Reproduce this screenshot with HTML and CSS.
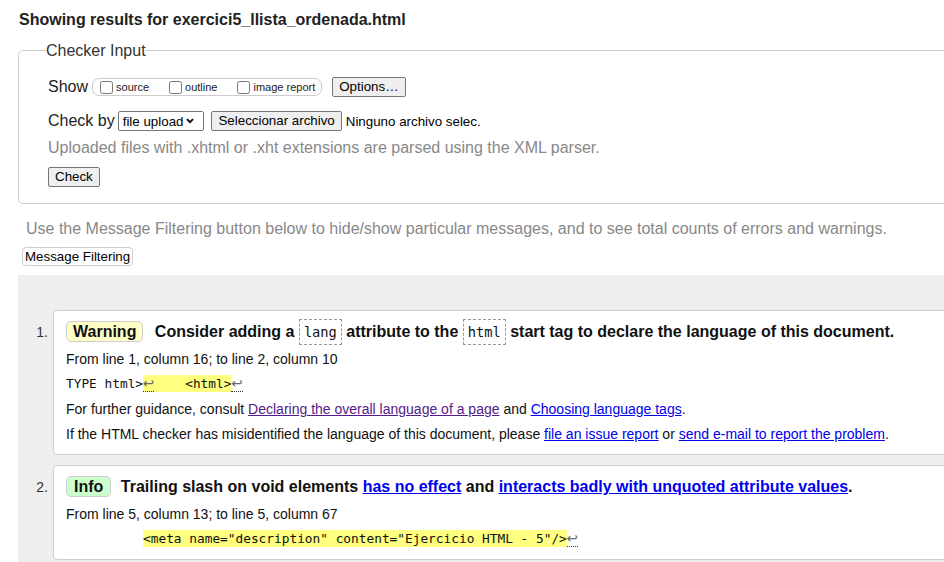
FILE: index.html
```html
<!DOCTYPE html>
<html lang="en">
<head>
<meta charset="utf-8">
<title>Showing results for exercici5_llista_ordenada.html</title>
<link rel="stylesheet" href="styles.css">
</head>
<body>
<div class="page">
  <h2 class="results-heading">Showing results for exercici5_llista_ordenada.html</h2>

  <fieldset class="checker">
    <legend>Checker Input</legend>
    <div class="row show-row">
      <span class="row-label">Show</span>
      <span class="opts">
        <label class="opt"><input type="checkbox">source</label>
        <label class="opt"><input type="checkbox">outline</label>
        <label class="opt"><input type="checkbox">image report</label>
      </span>
      <button class="btn options-btn" type="button">Options…</button>
    </div>
    <div class="row checkby-row">
      <span class="row-label">Check by</span>
      <span class="select">file upload
        <svg class="chev" width="8" height="6" viewBox="0 0 8 6" aria-hidden="true"><path d="M1 1.2 L4 4.2 L7 1.2" fill="none" stroke="#000" stroke-width="1.8"/></svg>
      </span>
      <button class="btn file-btn" type="button">Seleccionar archivo</button>
      <span class="nofile">Ninguno archivo selec.</span>
    </div>
    <p class="hint">Uploaded files with .xhtml or .xht extensions are parsed using the XML parser.</p>
    <div class="check-row"><button class="btn" type="button">Check</button></div>
  </fieldset>

  <p class="filter-note">Use the Message Filtering button below to hide/show particular messages, and to see total counts of errors and warnings.</p>
  <div class="filter-row"><button class="filter-btn" type="button">Message Filtering</button></div>

  <div class="results-area">
    <ol class="messages">
      <li class="item">
        <span class="num">1.</span>
        <div class="msg warning">
          <p class="title"><span class="badge">Warning</span> <span>Consider adding a <code class="tag">lang</code> attribute to the <code class="tag">html</code> start tag to declare the language of this document.</span></p>
          <p class="line">From line 1, column 16; to line 2, column 10</p>
          <p class="extract">TYPE html&gt;<mark class="hl"><b class="lf">↩</b>    &lt;html&gt;</mark><b class="lf">↩</b></p>
          <p class="line">For further guidance, consult <a class="visited" href="#">Declaring the overall language of a page</a> and <a href="#">Choosing language tags</a>.</p>
          <p class="line">If the HTML checker has misidentified the language of this document, please <a href="#">file an issue report</a> or <a href="#">send e-mail to report the problem</a>.</p>
        </div>
      </li>
      <li class="item">
        <span class="num">2.</span>
        <div class="msg info">
          <p class="title"><span class="badge">Info</span> <span>Trailing slash on void elements <a href="#">has no effect</a> and <a href="#">interacts badly with unquoted attribute values</a>.</span></p>
          <p class="line">From line 5, column 13; to line 5, column 67</p>
          <p class="extract">          <mark class="hl">&lt;meta name="description" content="Ejercicio HTML - 5"/&gt;</mark><b class="lf">↩</b></p>
        </div>
      </li>
    </ol>
  </div>
</div>
</body>
</html>
```

FILE: styles.css
```css
html, body {
  margin: 0;
  padding: 0;
  overflow: hidden;
  background: #fff;
}

body {
  font-family: "Liberation Sans", Arial, sans-serif;
  font-size: 16px;
  color: #222;
}

.page {
  width: 1040px;
  padding-top: 10px;
}

.results-heading {
  margin: 0 0 0 19px;
  font-size: 16px;
  line-height: 19px;
  font-weight: bold;
  color: #222;
}

/* ---------- Checker input ---------- */
.checker {
  margin: 12px 0 0 18px;
  padding: 16px 0 16px 29px;
  border: 1px solid #ccc;
  border-radius: 5px;
  min-width: 0;
}

.checker legend {
  padding: 0;
  margin-left: -2px;
  font-size: 16px;
  line-height: 19px;
  color: #333;
}

.row {
  display: flex;
  align-items: center;
  height: 22px;
}

.checkby-row {
  margin-top: 12px;
}

.row-label {
  font-size: 16px;
  color: #222;
}

.show-row .row-label {
  margin-right: 4px;
}

.opts {
  display: inline-flex;
  align-items: center;
  box-sizing: border-box;
  height: 18px;
  border: 1px solid #ccc;
  border-radius: 7px;
  padding: 0 6px 0 7px;
  margin-right: 10px;
}

.opt {
  display: inline-flex;
  align-items: center;
  gap: 3px;
  font-size: 11px;
  color: #222;
}

.opt + .opt {
  margin-left: 20px;
}

.opt input {
  margin: 0;
  width: 13px;
  height: 13px;
}

.btn {
  box-sizing: border-box;
  height: 20px;
  padding: 0 6px;
  border: 1px solid #767676;
  border-radius: 2px;
  background: #efefef;
  color: #000;
  font-family: "Liberation Sans", Arial, sans-serif;
  font-size: 13.33px;
  line-height: 18px;
}

.select {
  display: inline-flex;
  align-items: center;
  box-sizing: border-box;
  height: 20px;
  margin-left: 3px;
  padding: 0 9px 0 4px;
  border: 1px solid #767676;
  border-radius: 2px;
  background: #fff;
  font-size: 13.33px;
  color: #000;
  gap: 3px;
}

.chev {
  display: block;
}

.file-btn {
  margin-left: 7px;
}

.nofile {
  margin-left: 4px;
  font-size: 13.33px;
  color: #000;
}

.hint {
  margin: 6px 0 0;
  font-size: 16px;
  line-height: 19px;
  color: #888;
}

.check-row {
  display: flex;
  margin-top: 10px;
}

/* ---------- Filter ---------- */
.filter-note {
  margin: 15px 0 0 26px;
  font-size: 16px;
  line-height: 19px;
  color: #888;
  white-space: nowrap;
}

.filter-row {
  display: flex;
  margin: 9px 0 0 22px;
}

.filter-btn {
  box-sizing: border-box;
  height: 19px;
  padding: 0 2px;
  border: 1px solid #ccc;
  border-radius: 4px;
  background: #fff;
  color: #000;
  font-family: "Liberation Sans", Arial, sans-serif;
  font-size: 13.33px;
  line-height: 17px;
}

/* ---------- Results ---------- */
.results-area {
  margin: 9px 0 0 18px;
  padding: 35px 0 0;
  background: #eee;
  min-height: 400px;
}

.messages {
  margin: 0;
  padding: 0;
  list-style: none;
}

.item {
  display: flex;
  align-items: flex-start;
}

.item + .item {
  margin-top: 10px;
}

.num {
  box-sizing: border-box;
  width: 35px;
  flex: none;
  padding: 12px 5px 0 0;
  text-align: right;
  font-size: 14px;
  line-height: 20px;
  color: #333;
}

.msg {
  flex: 1;
  background: #fff;
  border: 1px solid #ccc;
  border-radius: 4px 0 0 4px;
  padding: 0 12px 10px;
  color: #111;
}

.msg p {
  margin: 5px 0 0;
  white-space: nowrap;
}

.msg .title {
  margin-top: 8px;
  font-size: 16px;
  line-height: 26px;
  font-weight: bold;
  color: #111;
}

.msg .title + .line {
  margin-top: 4px;
}

.badge {
  display: inline-block;
  padding: 0 6px;
  border: 1px solid #ccc;
  border-radius: 5px;
  line-height: 19px;
}

.warning .badge {
  background: #ffffc8;
  margin-right: 7px;
}

.info .badge {
  background: #ccffcc;
  padding: 0 7px;
  margin-right: 5px;
}

.tag {
  font-family: "DejaVu Sans Mono", "Liberation Mono", monospace;
  font-size: 13.7px;
  font-weight: normal;
  padding: 4px 4px;
  border: 1px dashed #999;
}

.line {
  font-size: 14px;
  line-height: 20px;
}

.msg .extract {
  font-family: "DejaVu Sans Mono", "Liberation Mono", monospace;
  font-size: 12.8px;
  line-height: 20px;
  height: 20px;
  white-space: pre;
  color: #111;
}

.hl {
  background: #ffff80;
  color: #111;
  padding: 1px 0;
}

.lf {
  font-family: "DejaVu Sans", sans-serif;
  font-size: 13.5px;
  line-height: 0;
  font-weight: normal;
  color: #666;
  border-bottom: 1px dotted #333;
}

a {
  color: #0000ee;
  text-decoration: underline;
}

a.visited {
  color: #551a8b;
}
```
